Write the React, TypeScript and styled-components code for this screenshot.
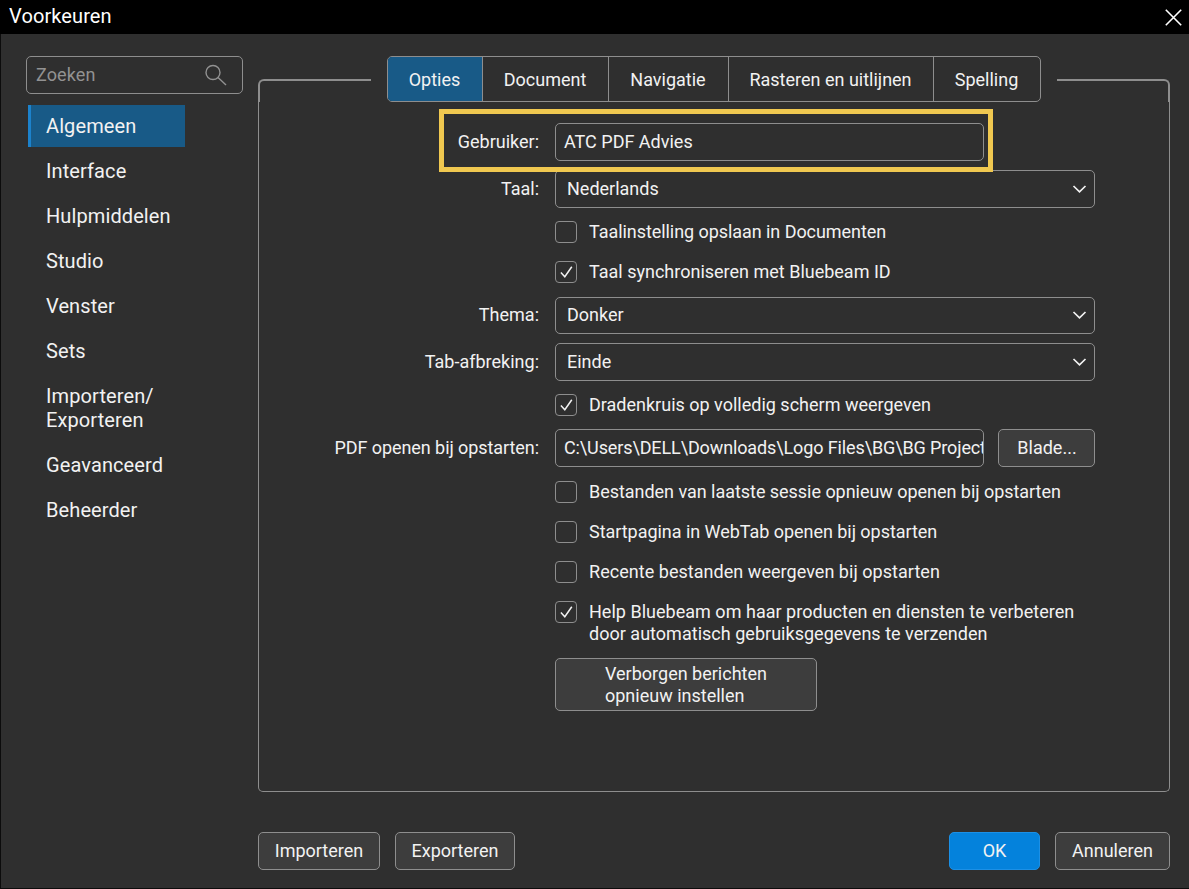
import React from "react";
import styled, { createGlobalStyle } from "styled-components";

const line = "#8e8e8e";

const Global = createGlobalStyle`
  * { box-sizing: border-box; }
  body { margin: 0; background: #2f2f2f; overflow: hidden; }
`;

const Dialog = styled.div`
  width: 1189px;
  height: 889px;
  display: flex;
  flex-direction: column;
  background: #2f2f2f;
  color: #f2f2f2;
  font: 18px/22px Roboto, "Liberation Sans", sans-serif;
  white-space: nowrap;
`;

const TitleBar = styled.header`
  height: 34px;
  flex: none;
  display: flex;
  justify-content: space-between;
  align-items: center;
  padding: 0 7px 0 9px;
  background: #000;
  color: #fff;
  font-size: 20px;
`;

const Title = styled.span`
  letter-spacing: 0.1px;
  padding-bottom: 2px;
`;

const Main = styled.div`
  flex: 1;
  display: flex;
  border-left: 1px solid #0c0c0c;
  border-bottom: 1px solid #0c0c0c;
`;

const Sidebar = styled.aside`
  width: 257px;
  padding: 22px 0 0 25px;
`;

const Search = styled.div`
  width: 217px;
  height: 38px;
  display: flex;
  align-items: center;
  justify-content: space-between;
  padding: 0 15px 1px 9px;
  border: 1px solid ${line};
  border-radius: 5px;
  color: #929292;
  letter-spacing: 0.1px;
`;

const Nav = styled.nav`
  margin-top: 11px;
  padding-left: 2px;
  display: flex;
  flex-direction: column;
  gap: 3px;
`;

const NavItem = styled.a<{ $active?: boolean }>`
  width: 157px;
  padding: 9px 0 9px 15px;
  border-left: 3px solid ${(p) => (p.$active ? "#1c82cc" : "transparent")};
  background: ${(p) => (p.$active ? "#185a87" : "none")};
  font-size: 20px;
  line-height: 24px;
  letter-spacing: 0.1px;
`;

const Content = styled.main`
  width: 912px;
  padding-top: 22px;
`;

const PanelTop = styled.div`
  height: 46px;
  display: flex;
  justify-content: space-between;
  align-items: flex-end;
`;

const Corner = styled.div<{ $side: "left" | "right" }>`
  width: 113px;
  height: 23px;
  border-top: 2px solid ${line};
  border-${(p) => p.$side}: 2px solid ${line};
  border-top-${(p) => p.$side}-radius: 6px;
`;

const Tabs = styled.div`
  width: 654px;
  height: 46px;
  display: flex;
  border: 1px solid ${line};
  border-radius: 5px;
  overflow: hidden;
`;

const Tab = styled.div<{ $w: number; $active?: boolean }>`
  width: ${(p) => p.$w}px;
  flex: none;
  display: flex;
  align-items: center;
  justify-content: center;
  padding: 2px 1px 0 0;
  background: ${(p) => (p.$active ? "#185a87" : "none")};
  & + & { border-left: 1px solid ${line}; }
`;

const Body = styled.section`
  height: 690px;
  border: 1px solid ${line};
  border-top: 0;
  border-radius: 0 0 5px 5px;
  padding-top: 7px;
`;

const Row = styled.div<{ $h?: number; $gap?: number }>`
  height: ${(p) => p.$h ?? 38}px;
  margin-top: ${(p) => p.$gap ?? 0}px;
  display: flex;
  align-items: flex-start;
`;

const UserRow = styled.div`
  position: relative;
  z-index: 1;
  width: 554px;
  height: 63px;
  margin-left: 180px;
  display: flex;
  padding: 9px 0 0 0;
  border: 5px solid #f0c850;
`;

const Label = styled.label<{ $w?: number; $tight?: boolean }>`
  width: ${(p) => p.$w ?? 280}px;
  flex: none;
  margin-right: 16px;
  padding-top: 8px;
  text-align: right;
  letter-spacing: ${(p) => (p.$tight ? "-0.07px" : "normal")};
`;

const Field = styled.div`
  width: 429px;
  height: 38px;
  padding: 7px 0 0 8px;
  border: 1px solid ${line};
  border-radius: 5px;
  overflow: hidden;
`;

const PathField = styled(Field)`
  margin-right: 14px;
  letter-spacing: -0.12px;
`;

const Select = styled.div`
  width: 540px;
  height: 100%;
  display: flex;
  justify-content: space-between;
  padding: 7px 7px 0 11px;
  border: 1px solid ${line};
  border-radius: 5px;
`;

const ThemeRow = styled(Row)`
  ${Label} { padding-top: 7px; }
  ${Select} { padding-top: 6px; }
`;

const CheckRow = styled.div<{ $gap: number; $spacing?: number }>`
  display: flex;
  margin: ${(p) => p.$gap}px 0 0 296px;
  height: 22px;
  gap: 12px;
  letter-spacing: ${(p) => p.$spacing ?? 0}px;
`;

const Box = styled.span`
  width: 22px;
  height: 22px;
  flex: none;
  display: flex;
  align-items: center;
  justify-content: center;
  border: 1px solid ${line};
  border-radius: 4px;
`;

const Button = styled.button<{ $w: number; $primary?: boolean }>`
  width: ${(p) => p.$w}px;
  height: 38px;
  padding: 0;
  border: 1px solid ${(p) => (p.$primary ? "#1c90e6" : line)};
  border-radius: 5px;
  background: ${(p) => (p.$primary ? "#0482dc" : "#3d3d3d")};
  color: inherit;
  font: inherit;
`;

const BrowseButton = styled(Button)`
  padding-left: 1px;
`;

const ResetButton = styled(Button)`
  height: 53px;
  margin: 35px 0 0 296px;
  padding-left: 49px;
  text-align: left;
`;

const Footer = styled.footer`
  display: flex;
  gap: 15px;
  margin-top: 40px;
`;

const Spacer = styled.div`
  flex: 1;
`;

const Chevron = () => (
  <svg width="16" height="22" viewBox="0 0 16 22" fill="none" stroke="#f2f2f2" strokeWidth="1.7">
    <path d="M2.5 8 8.5 13.8 14.5 8" />
  </svg>
);

type CheckProps = { on?: boolean; gap: number; spacing?: number; children: React.ReactNode };

const Check = ({ on, gap, spacing, children }: CheckProps) => (
  <CheckRow $gap={gap} $spacing={spacing}>
    <Box>
      {on && (
        <svg width="14" height="14" viewBox="0 0 14 14" fill="none" stroke="#f2f2f2" strokeWidth="1.5">
          <path d="M1.9 7.6 5.8 11.8 12.8 1.8" />
        </svg>
      )}
    </Box>
    <span>{children}</span>
  </CheckRow>
);

const items: React.ReactNode[] = [
  "Algemeen", "Interface", "Hulpmiddelen", "Studio", "Venster", "Sets",
  <>Importeren/<br />Exporteren</>, "Geavanceerd", "Beheerder",
];

const tabs: [string, number][] = [
  ["Opties", 94], ["Document", 126], ["Navigatie", 120], ["Rasteren en uitlijnen", 205], ["Spelling", 107],
];

export default function App() {
  return (
    <Dialog>
      <Global />
      <TitleBar>
        <Title>Voorkeuren</Title>
        <svg width="17" height="17" viewBox="0 0 17 17" stroke="#fff" strokeWidth="1.6">
          <path d="M.8.8 16.2 16.2M16.2.8.8 16.2" />
        </svg>
      </TitleBar>
      <Main>
        <Sidebar>
          <Search>
            <span>Zoeken</span>
            <svg width="24" height="22" viewBox="0 0 24 22" fill="none" stroke="#929292" strokeWidth="1.4">
              <circle cx="10" cy="8.5" r="7" />
              <path d="M15 13.5 23 21" />
            </svg>
          </Search>
          <Nav>
            {items.map((item, i) => (
              <NavItem key={i} $active={i === 0}>{item}</NavItem>
            ))}
          </Nav>
        </Sidebar>
        <Content>
          <PanelTop>
            <Corner $side="left" />
            <Tabs>
              {tabs.map(([name, w], i) => (
                <Tab key={name} $w={w} $active={i === 0}>{name}</Tab>
              ))}
            </Tabs>
            <Corner $side="right" />
          </PanelTop>
          <Body>
            <UserRow>
              <Label $w={95}>Gebruiker:</Label>
              <Field>ATC PDF Advies</Field>
            </UserRow>
            <Row $gap={-2}>
              <Label>Taal:</Label>
              <Select>Nederlands<Chevron /></Select>
            </Row>
            <Check gap={13} spacing={-0.06}>Taalinstelling opslaan in Documenten</Check>
            <Check gap={18} on>Taal synchroniseren met Bluebeam ID</Check>
            <ThemeRow $h={37} $gap={14}>
              <Label>Thema:</Label>
              <Select>Donker<Chevron /></Select>
            </ThemeRow>
            <Row $gap={9}>
              <Label>Tab-afbreking:</Label>
              <Select>Einde<Chevron /></Select>
            </Row>
            <Check gap={13} on>Dradenkruis op volledig scherm weergeven</Check>
            <Row $gap={13}>
              <Label $tight>PDF openen bij opstarten:</Label>
              <PathField>C:\Users\DELL\Downloads\Logo Files\BG\BG Project</PathField>
              <BrowseButton $w={97}>Blade...</BrowseButton>
            </Row>
            <Check gap={14} spacing={-0.035}>Bestanden van laatste sessie opnieuw openen bij opstarten</Check>
            <Check gap={18} spacing={-0.04}>Startpagina in WebTab openen bij opstarten</Check>
            <Check gap={18} spacing={0.04}>Recente bestanden weergeven bij opstarten</Check>
            <Check gap={18} spacing={0.02} on>
              Help Bluebeam om haar producten en diensten te verbeteren<br />
              door automatisch gebruiksgegevens te verzenden
            </Check>
            <ResetButton $w={262}>Verborgen berichten<br />opnieuw instellen</ResetButton>
          </Body>
          <Footer>
            <Button $w={122}>Importeren</Button>
            <Button $w={120}>Exporteren</Button>
            <Spacer />
            <Button $w={91} $primary>OK</Button>
            <Button $w={115}>Annuleren</Button>
          </Footer>
        </Content>
      </Main>
    </Dialog>
  );
}
